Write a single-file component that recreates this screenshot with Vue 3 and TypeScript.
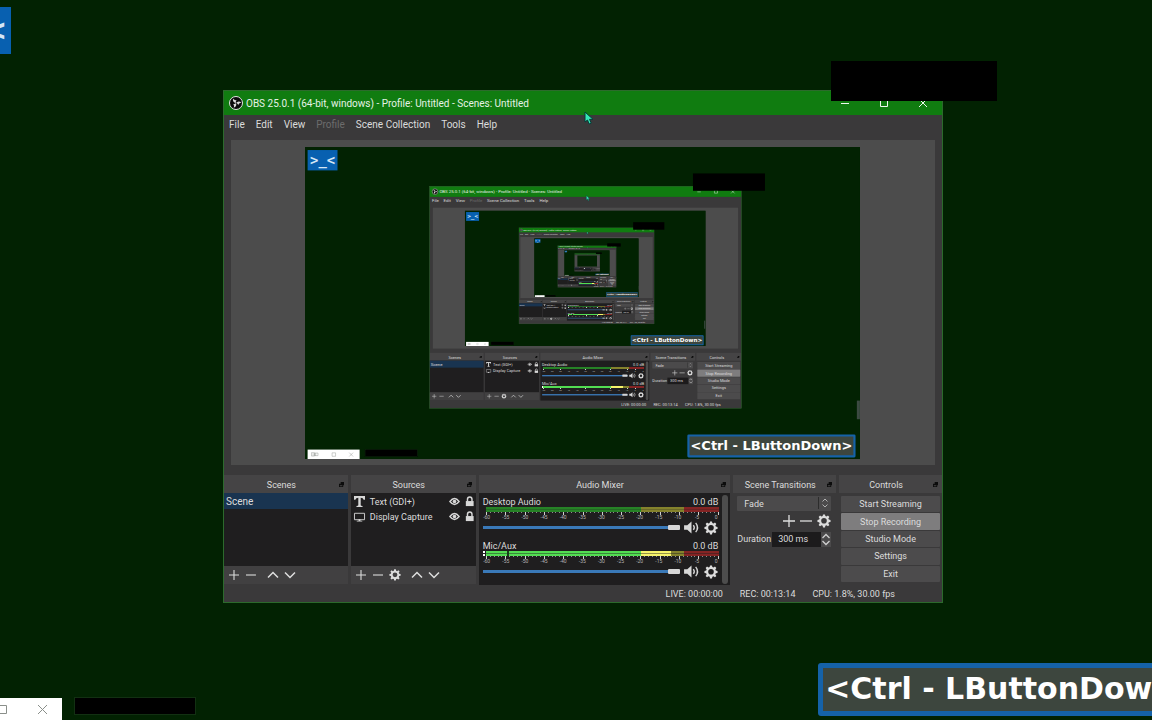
<script setup lang="ts">
import { computed, getCurrentInstance } from 'vue'

const props = withDefaults(defineProps<{ depth?: number }>(), { depth: 0 })

// The captured display contains this very window, so the preview renders the component again.
const self = getCurrentInstance()!.type
const maxDepth = 4
const nested = computed(() => props.depth > 0)
const uid = (name: string) => `${name}-${props.depth}`

const menus = ['File', 'Edit', 'View', 'Profile', 'Scene Collection', 'Tools', 'Help']
const sources = [
  { name: 'Text (GDI+)', kind: 'text' },
  { name: 'Display Capture', kind: 'display' },
]
const channels = [
  { id: 'desktop', name: 'Desktop Audio', db: '0.0 dB', active: false },
  { id: 'mic', name: 'Mic/Aux', db: '0.0 dB', active: true },
]
const marks = [-60, -55, -50, -45, -40, -35, -30, -25, -20, -15, -10, -5, 0]
const ticks = Array.from({ length: 61 }, (_, i) => i)
const controls = ['Start Streaming', 'Stop Recording', 'Studio Mode', 'Settings', 'Exit']
const gear =
  'M6.7 0h2.6l.4 2.2 1.5.6 1.9-1.3 1.8 1.8-1.3 1.9.6 1.5 2.2.4v2.6l-2.2.4-.6 1.5 1.3 1.9-1.8 1.8-1.9-1.3-1.5.6-.4 2.2H6.7l-.4-2.2-1.5-.6-1.9 1.3-1.8-1.8 1.3-1.9-.6-1.5L-.4 9.700V7.100l2.200-.4.6-1.500L1.100 3.300l1.800-1.800 1.900 1.300 1.500-.6zM8 4.600a3.600 3.600 0 1 0 0 7.200 3.600 3.600 0 0 0 0-7.200z'
</script>

<template>
  <div class="desktop" :class="{ nested }">
    <div class="stage">
      <div class="logo">&gt;_&lt;</div>

      <main class="window">
        <header class="titlebar">
          <svg class="obs" viewBox="0 0 28 28">
            <circle cx="14" cy="14" r="13" fill="#0b0b0b" stroke="#e4e4e4" stroke-width="2" />
            <g fill="#dcdcdc">
              <path d="M8 5c-1 5 1 8 6 9-1-3 0-5 2-6-3 1-6 0-8-3z" />
              <path d="M8 5c-1 5 1 8 6 9-1-3 0-5 2-6-3 1-6 0-8-3z" transform="rotate(120 14 14)" />
              <path d="M8 5c-1 5 1 8 6 9-1-3 0-5 2-6-3 1-6 0-8-3z" transform="rotate(240 14 14)" />
            </g>
          </svg>
          <h1>OBS 25.0.1 (64-bit, windows) - Profile: Untitled - Scenes: Untitled</h1>
          <div class="caption">
            <button aria-label="Minimize"><svg viewBox="0 0 10 10"><path d="M1 5.500h8" /></svg></button>
            <button aria-label="Maximize"><svg viewBox="0 0 10 10"><path d="M1.500 1.500h7v7h-7z" /></svg></button>
            <button aria-label="Close"><svg viewBox="0 0 10 10"><path d="M1 1l8 8M9 1l-8 8" /></svg></button>
          </div>
        </header>

        <nav class="menubar">
          <button v-for="m in menus" :key="m" :disabled="m === 'Profile'">{{ m }}</button>
        </nav>

        <section class="canvas">
          <div class="preview" inert>
            <component :is="self" v-if="depth < maxDepth" :depth="depth + 1" />
          </div>
        </section>

        <div class="docks">
          <section class="dock scenes">
            <h2><span>Scenes</span><svg class="float" viewBox="0 0 6 6"><path d="M2 0h4v4H5v2H0V2h2zM1 4v1h3V4z" /></svg></h2>
            <ul class="list">
              <li class="selected">Scene</li>
            </ul>
            <div class="tools">
              <button aria-label="Add scene"><svg viewBox="0 0 12 12"><path d="M6 0v12M0 6h12" /></svg></button>
              <button aria-label="Remove scene"><svg viewBox="0 0 12 12"><path d="M0 6h12" /></svg></button>
              <i class="sep"></i>
              <button aria-label="Move scene up"><svg class="bold" viewBox="0 0 12 12"><path d="M0 9l6-6 6 6" /></svg></button>
              <button aria-label="Move scene down"><svg class="bold" viewBox="0 0 12 12"><path d="M0 3l6 6 6-6" /></svg></button>
            </div>
          </section>

          <section class="dock sources">
            <h2><span>Sources</span><svg class="float" viewBox="0 0 6 6"><path d="M2 0h4v4H5v2H0V2h2zM1 4v1h3V4z" /></svg></h2>
            <ul class="list">
              <li v-for="s in sources" :key="s.name">
                <svg v-if="s.kind === 'text'" class="kind" viewBox="0 0 12 12">
                  <path fill="#d8d8d8" d="M0 0h12v4h-1.500Q10 1.800 7.300 1.800V10q0 .8 2 1V12H2.700v-1q2-.2 2-1V1.800Q2 1.800 1.500 4H0z" />
                </svg>
                <svg v-else class="kind" viewBox="0 0 12 12">
                  <path fill="none" stroke="#d8d8d8" d="M.5 2.500h11v7H.5z" />
                  <path fill="#d8d8d8" d="M5 9h2v1.500h2v1H3v-1h2z" />
                </svg>
                <span>{{ s.name }}</span>
                <button aria-label="Toggle visibility">
                  <svg viewBox="0 0 12 12">
                    <path fill="none" stroke="#d8d8d8" stroke-width="1.500" d="M1 6q5-6.500 10 0-5 6.500-10 0z" />
                    <circle cx="6" cy="6" r="2" fill="#d8d8d8" />
                  </svg>
                </button>
                <button aria-label="Toggle lock">
                  <svg viewBox="0 0 12 12">
                    <path fill="#d8d8d8" d="M2 5.500h8.500V11H2z" />
                    <path fill="none" stroke="#d8d8d8" stroke-width="1.600" d="M3.800 6V3.500a2.400 2.400 0 0 1 4.900 0V6" />
                  </svg>
                </button>
              </li>
            </ul>
            <div class="tools">
              <button aria-label="Add source"><svg viewBox="0 0 12 12"><path d="M6 0v12M0 6h12" /></svg></button>
              <button aria-label="Remove source"><svg viewBox="0 0 12 12"><path d="M0 6h12" /></svg></button>
              <button aria-label="Source properties"><svg class="fill" viewBox="-1 0 18 17"><path fill-rule="evenodd" :d="gear" /></svg></button>
              <i class="sep"></i>
              <button aria-label="Move source up"><svg class="bold" viewBox="0 0 12 12"><path d="M0 9l6-6 6 6" /></svg></button>
              <button aria-label="Move source down"><svg class="bold" viewBox="0 0 12 12"><path d="M0 3l6 6 6-6" /></svg></button>
            </div>
          </section>

          <section class="dock mixer">
            <h2><span>Audio Mixer</span><svg class="float" viewBox="0 0 6 6"><path d="M2 0h4v4H5v2H0V2h2zM1 4v1h3V4z" /></svg></h2>
            <div class="mixbody">
              <div class="channels">
                <div v-for="c in channels" :key="c.id" class="channel">
                  <div class="names">
                    <label :for="uid(c.id)">{{ c.name }}</label>
                    <span>{{ c.db }}</span>
                  </div>
                  <svg class="meter" viewBox="0 0 235 8" preserveAspectRatio="none" shape-rendering="crispEdges">
                    <rect x="3" width="155" height="5" :fill="c.active ? '#52dd52' : '#268226'" />
                    <rect x="158" width="42" height="5" fill="#84822c" />
                    <rect v-if="c.active" x="158" width="29" height="5" fill="#f6f36b" />
                    <rect x="200" width="35" height="5" fill="#842424" />
                    <rect x="3" y="2" width="232" height="1" fill="#1f1e1f" :opacity="c.active ? 0.45 : 0.25" />
                    <rect v-if="c.active" x="24" width="2" height="5" fill="#16401a" />
                    <path v-if="c.active" fill="#fff" d="M0 0h2v2H0zM0 3h2v2H0z" />
                    <rect v-for="t in ticks" :key="t" :x="3 + (t * 231) / 60" y="5" width="1" :height="t % 5 ? 1 : 3" :fill="t % 5 ? '#8d8d8d' : '#d0d0d0'" />
                  </svg>
                  <div class="scale"><span v-for="m in marks" :key="m">{{ m }}</span></div>
                  <div class="volume">
                    <input :id="uid(c.id)" type="range" min="0" max="100" value="100" />
                    <button aria-label="Mute">
                      <svg class="speaker" viewBox="0 0 16 14">
                        <path fill="#d8d8d8" d="M0 4.500h3.500L8 .5v13L3.500 9.500H0z" />
                        <path fill="none" stroke="#d8d8d8" stroke-width="1.500" d="M10 4.500q2 2.500 0 5M12.500 2q4 5 0 10" />
                      </svg>
                    </button>
                    <button aria-label="Channel settings"><svg class="fill cog" viewBox="-1 0 18 17"><path fill-rule="evenodd" :d="gear" /></svg></button>
                  </div>
                </div>
              </div>
              <div class="scrollbar"></div>
            </div>
          </section>

          <section class="dock transitions">
            <h2><span>Scene Transitions</span><svg class="float" viewBox="0 0 6 6"><path d="M2 0h4v4H5v2H0V2h2zM1 4v1h3V4z" /></svg></h2>
            <div class="form">
              <div class="combo">
                <select aria-label="Transition"><option>Fade</option></select>
                <svg class="arrows" viewBox="0 0 8 12"><path d="M1.500 4.500L4 2l2.500 2.500M1.500 7.500L4 10l2.500-2.500" /></svg>
              </div>
              <div class="row">
                <button aria-label="Add transition"><svg viewBox="0 0 12 12"><path d="M6 0v12M0 6h12" /></svg></button>
                <button aria-label="Remove transition"><svg viewBox="0 0 12 12"><path d="M0 6h12" /></svg></button>
                <button aria-label="Transition properties"><svg class="fill cog" viewBox="-1 0 18 17"><path fill-rule="evenodd" :d="gear" /></svg></button>
              </div>
              <div class="duration">
                <label :for="uid('duration')">Duration</label>
                <input :id="uid('duration')" type="text" value="300 ms" />
                <svg class="spin" viewBox="0 0 10 14"><path d="M1.500 5.500L5 2l3.500 3.500M1.500 8.500L5 12l3.500-3.500" /></svg>
              </div>
            </div>
          </section>

          <section class="dock controls">
            <h2><span>Controls</span><svg class="float" viewBox="0 0 6 6"><path d="M2 0h4v4H5v2H0V2h2zM1 4v1h3V4z" /></svg></h2>
            <div class="buttons">
              <button v-for="b in controls" :key="b" :class="{ on: b === 'Stop Recording' }">{{ b }}</button>
            </div>
          </section>
        </div>

        <footer class="status">
          <span>LIVE: 00:00:00</span>
          <span>REC: 00:13:14</span>
          <span>CPU: 1.8%, 30.00 fps</span>
        </footer>
      </main>

      <div class="cover top"></div>
      <svg class="cursor" viewBox="0 0 10 14"><path d="M1 1v10l2.500-2 1.700 4 2-.9L5.600 8.300H9z" /></svg>

      <div class="miniwin">
        <svg viewBox="0 0 17 11"><path d="M1 1h7v8H1zM9 2h7v6H9zM3 4h9M3 7h9" /></svg>
        <svg viewBox="0 0 11 11"><path d="M1.500 1.500h8v8h-8z" /></svg>
        <svg viewBox="0 0 11 11"><path d="M1 1l9 9M10 1l-9 9" /></svg>
      </div>
      <div class="cover bottom"></div>
      <div class="handle"></div>
      <div class="keys">&lt;Ctrl - LButtonDown&gt;</div>
    </div>
  </div>
</template>

<style>
body {
  margin: 0;
  background: #022202;
}
</style>

<style scoped>
* {
  box-sizing: border-box;
}
.desktop {
  display: flex;
  justify-content: center;
  height: 100vh;
  overflow: hidden;
  background: #022202;
  color: #dcdcdc;
  font: 9px/14px Roboto, "Noto Sans", sans-serif;
}
.desktop.nested {
  position: absolute;
  top: 0;
  left: 0;
  width: 1280px;
  height: 720px;
  transform: scale(0.4335);
  transform-origin: 0 0;
}
.stage {
  position: relative;
  flex: none;
  width: 1280px;
}
button {
  display: flex;
  align-items: center;
  justify-content: center;
  padding: 0;
  border: 0;
  background: none;
  color: inherit;
  font: inherit;
}
svg {
  display: block;
  flex: none;
  overflow: visible;
}
h1,
h2,
ul {
  margin: 0;
  padding: 0;
  font: inherit;
  list-style: none;
}

/* Items on the desktop */
.logo {
  position: absolute;
  top: 7px;
  left: 6px;
  width: 69px;
  height: 47px;
  background: #0860b0;
  color: #d5e6f5;
  font: 700 32px/46px "DejaVu Sans Mono", monospace;
  text-align: center;
}
.cover {
  position: absolute;
  background: #000;
}
.cover.top {
  top: 61px;
  left: 895px;
  width: 166px;
  height: 40px;
}
.cover.bottom {
  bottom: 5px;
  left: 138px;
  width: 122px;
  height: 18px;
  border: 1px solid #123012;
}
.cursor {
  position: absolute;
  top: 111px;
  left: 648px;
  width: 10px;
  height: 14px;
  fill: #35e8b5;
  stroke: #063b38;
}
.miniwin {
  position: absolute;
  bottom: 0;
  left: 6px;
  display: flex;
  align-items: center;
  justify-content: space-between;
  width: 120px;
  height: 22px;
  padding: 0 14px 0 8px;
  background: #fff;
}
.miniwin svg {
  height: 11px;
  fill: none;
  stroke: #8a8f8a;
}
.handle {
  position: absolute;
  top: 585px;
  right: 0;
  width: 7px;
  height: 43px;
  background: #3c4a42;
}
.keys {
  position: absolute;
  bottom: 4px;
  left: 882px;
  width: 388px;
  height: 53px;
  border: 5px solid #1562a8;
  border-radius: 3px;
  background: #3d463e;
  color: #fff;
  font: 700 30px/42px "DejaVu Sans", sans-serif;
  text-align: center;
  white-space: nowrap;
}

/* Window */
.window {
  position: absolute;
  top: 90px;
  left: 287px;
  display: flex;
  flex-direction: column;
  width: 720px;
  border: 1px solid #2c6a2c;
  background: #3a393a;
}
.titlebar {
  display: flex;
  align-items: center;
  height: 24px;
  padding-left: 5px;
  background: #107c10;
  color: #e6f2e6;
  font-size: 10px;
}
.titlebar h1 {
  line-height: 24px;
  padding-top: 1px;
}
.obs {
  width: 14px;
  height: 14px;
  margin-right: 3px;
}
.caption {
  display: flex;
  margin-left: auto;
}
.caption button {
  width: 39px;
  height: 24px;
}
.caption svg {
  width: 10px;
  height: 10px;
  fill: none;
  stroke: #f0f8f0;
}
.menubar {
  display: flex;
  gap: 11px;
  height: 25px;
  padding: 0 5px 5px;
  font-size: 10px;
}
.menubar button:disabled {
  color: #6c6c6c;
}
.canvas {
  display: flex;
  justify-content: center;
  margin: 0 7px 10px;
  padding: 7px 2px 6px 0;
  background: #4c4c4c;
}
.preview {
  position: relative;
  width: 555px;
  height: 312px;
  overflow: hidden;
  background: #022202;
}

/* Docks */
.docks {
  display: grid;
  grid-template-columns: 124fr 125fr 252fr 103fr 103fr;
  gap: 3px;
  height: 110px;
}
.dock {
  display: flex;
  flex-direction: column;
  min-width: 0;
}
.dock h2 {
  display: flex;
  flex: none;
  align-items: center;
  height: 18px;
  padding: 1px 4px 0 0;
  background: #454445;
}
.dock h2 span {
  flex: 1;
  text-align: center;
  white-space: nowrap;
}
.float {
  width: 5px;
  height: 5px;
  fill: #0c0c0c;
}
.list {
  flex: 1;
  background: #1f1e1f;
}
.scenes .list li {
  height: 16px;
  padding-left: 2px;
  background: #193450;
  font-size: 10px;
  line-height: 18px;
}
.sources .list li {
  display: flex;
  align-items: center;
  height: 15px;
  padding: 2px 0 0 3px;
}
.sources .list li span {
  flex: 1;
  white-space: nowrap;
}
.sources .list button {
  width: 16px;
}
.sources .list button:last-child {
  width: 13px;
}
.sources .list svg {
  width: 11px;
  height: 11px;
}
.kind {
  margin-right: 5px;
}
.tools {
  display: flex;
  align-items: center;
  height: 18px;
  margin-bottom: 1px;
  padding-left: 1px;
  background: #414041;
}
.sources .tools {
  padding-left: 2px;
}
.tools button {
  width: 17px;
  height: 18px;
}
.tools svg,
.row svg {
  width: 10px;
  height: 10px;
  fill: none;
  stroke: #dedede;
  stroke-width: 1.3;
}
.tools svg.bold {
  stroke-width: 1.8;
}
.tools svg.fill {
  width: 12px;
  height: 12px;
}
svg.fill,
.tools svg.fill,
.row svg.fill {
  fill: #dcdcdc;
  stroke: none;
}
.sep {
  width: 5px;
}
.mixbody {
  display: flex;
  flex: 1;
  gap: 4px;
  padding: 2px 2px 1px 4px;
  background: #1f1e1f;
}
.channels {
  flex: 1;
}
.channel {
  height: 44px;
}
.names {
  display: flex;
  justify-content: space-between;
  height: 12px;
  line-height: 14px;
}
.meter {
  width: 100%;
  height: 8px;
}
.scale {
  display: flex;
  justify-content: space-between;
  height: 5px;
  padding: 0 2px 0 4px;
  color: #b4b4b4;
  font-size: 5px;
  line-height: 5px;
}
.scale span {
  display: flex;
  justify-content: center;
  width: 0;
}
.volume {
  display: flex;
  align-items: center;
  height: 15px;
}
.volume input {
  flex: 1;
  min-width: 0;
  height: 7px;
  margin: 0 4px 0 0;
  appearance: none;
  background: linear-gradient(#3a79b8, #3a79b8) center / 100% 3px no-repeat;
}
.volume input::-webkit-slider-thumb {
  appearance: none;
  width: 12px;
  height: 5px;
  border-radius: 1px;
  background: #d6d6d6;
}
.volume button + button {
  margin-left: 5px;
}
.speaker {
  width: 15px;
  height: 13px;
}
svg.cog.fill {
  width: 14px;
  height: 14px;
}
.scrollbar {
  width: 6px;
  border-radius: 3px;
  background: #4d4d4d;
}
.form {
  display: flex;
  flex-direction: column;
  padding: 3px 5px 0 4px;
}
.combo {
  position: relative;
  display: flex;
}
.combo select {
  flex: 1;
  height: 15px;
  padding: 1px 7px 0;
  border: 0;
  border-radius: 1px;
  appearance: none;
  background: #4b4a4b;
  color: inherit;
  font: inherit;
  line-height: 15px;
}
.arrows {
  position: absolute;
  top: 1px;
  right: 0;
  width: 13px;
  height: 12px;
  border-left: 1px solid #2c2c2c;
  fill: none;
  stroke: #b0b0b0;
}
.row {
  display: flex;
  align-items: center;
  justify-content: flex-end;
  gap: 5px;
  height: 20px;
}
.row svg {
  width: 12px;
  height: 12px;
}
.duration {
  display: flex;
  align-items: center;
  height: 16px;
}
.duration input {
  flex: 1;
  width: 0;
  min-width: 0;
  height: 15px;
  margin-left: 1px;
  padding: 0 6px;
  border: 0;
  background: #1c1b1c;
  color: inherit;
  font: inherit;
}
.spin {
  width: 10px;
  height: 15px;
  background: #4b4a4b;
  fill: none;
  stroke: #d0d0d0;
  stroke-width: 1.3;
}
.buttons {
  display: flex;
  flex: 1;
  flex-direction: column;
  gap: 1px;
  padding: 3px 2px;
}
.buttons button {
  flex: 1;
  border-radius: 1px;
  background: #4c4b4c;
}
.buttons button.on {
  background: #7e7d7e;
}
.status {
  display: flex;
  justify-content: flex-end;
  gap: 17px;
  height: 17px;
  padding-right: 47px;
  line-height: 18px;
}
</style>
